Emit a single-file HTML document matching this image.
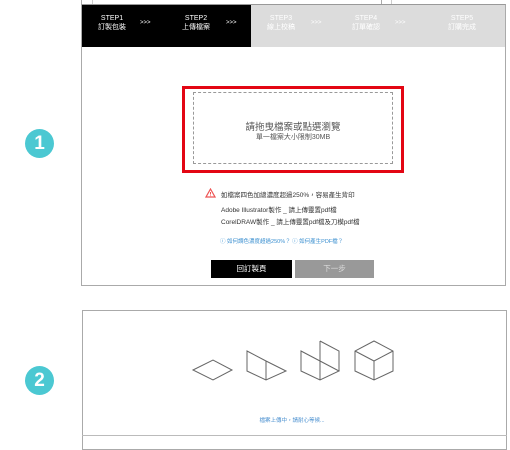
<!DOCTYPE html>
<html><head><meta charset="utf-8"><style>
*{margin:0;padding:0;box-sizing:border-box}
body{width:510px;height:448px;background:#fff;position:relative;overflow:hidden;font-family:"Liberation Sans","Noto Sans CJK TC",sans-serif}
.a{position:absolute}
.circ{position:absolute;width:29px;height:29px;border-radius:50%;background:#4bc8d2;color:#fff;font-weight:bold;font-size:19px;text-align:center;line-height:29px}
.st{position:absolute;top:14px;font-size:7px;text-align:center;line-height:9px;width:40px}
.ar{position:absolute;top:20px;font-size:6px}
.t{position:absolute;font-size:6.5px;color:#333;white-space:nowrap}
</style></head><body>
<div class="a" style="left:81px;top:0;width:1px;height:5px;background:#aaa"></div>
<div class="a" style="left:92px;top:0;width:1px;height:5px;background:#ccc"></div>
<div class="a" style="left:381px;top:0;width:1px;height:5px;background:#aaa"></div>
<div class="a" style="left:391px;top:0;width:1px;height:5px;background:#ccc"></div>
<div class="a" style="left:81px;top:4px;width:425px;height:282px;border:1px solid #aaa;border-top-color:#999"></div>
<div class="a" style="left:82px;top:5px;width:169px;height:42px;background:#000"></div>
<div class="a" style="left:251px;top:5px;width:254px;height:42px;background:#dcdcdc"></div>
<div class="st" style="left:92px;color:#fff">STEP1<br>訂製包裝</div>
<div class="ar" style="left:140px;color:#fff">&gt;&gt;&gt;</div>
<div class="st" style="left:176px;color:#fff">STEP2<br>上傳檔案</div>
<div class="ar" style="left:226px;color:#fff">&gt;&gt;&gt;</div>
<div class="st" style="left:261px;color:#fff">STEP3<br>線上校稿</div>
<div class="ar" style="left:311px;color:#fff">&gt;&gt;&gt;</div>
<div class="st" style="left:346px;color:#fff">STEP4<br>訂單確認</div>
<div class="ar" style="left:395px;color:#fff">&gt;&gt;&gt;</div>
<div class="st" style="left:442px;color:#fff">STEP5<br>訂購完成</div>
<div class="a" style="left:182px;top:86px;width:222px;height:87px;border:3px solid #e30613"></div>
<div class="a" style="left:193px;top:92px;width:200px;height:72px;border:1px dashed #999"></div>
<div class="t" style="left:0;width:586px;text-align:center;top:119px;font-size:9.5px;color:#555">請拖曳檔案或點選瀏覽</div>
<div class="t" style="left:0;width:586px;text-align:center;top:132px;font-size:7px;color:#555">單一檔案大小限制30MB</div>
<svg class="a" style="left:205px;top:188px" width="11" height="10"><path d="M5.5 1 L10 9 L1 9 Z" fill="none" stroke="#e55" stroke-width="1.2"/><path d="M5.5 4v2.5M5.5 7.5v.6" stroke="#e55"/></svg>
<div class="t" style="left:221px;top:189px">如檔案四色加總濃度超過250%，容易產生背印</div>
<div class="t" style="left:221px;top:204px">Adobe Illustrator製作 _ 請上傳靈置pdf檔</div>
<div class="t" style="left:221px;top:216px">CorelDRAW製作 _ 請上傳靈置pdf檔及刀模pdf檔</div>
<div class="t" style="left:220px;top:237px;font-size:5.5px;color:#3a8fd0">ⓘ 如何調色濃度超過250%？ ⓘ 如何產生PDF檔？</div>
<div class="a" style="left:211px;top:260px;width:81px;height:18px;background:#000;color:#fff;font-size:7.5px;text-align:center;line-height:18px">回訂製頁</div>
<div class="a" style="left:295px;top:260px;width:79px;height:18px;background:#999;color:#ddd;font-size:7.5px;text-align:center;line-height:18px">下一步</div>
<div class="a" style="left:82px;top:310px;width:425px;height:140px;border:1px solid #aaa"></div>
<div class="a" style="left:82px;top:435px;width:425px;height:1px;background:#bbb"></div>
<svg class="a" style="left:0;top:0" width="510" height="448"><g fill="none" stroke="#666" stroke-width="1">
<path d="M193 370L213 360L232 370L213 380Z"/>
<path d="M247 351L266 361L286 371L266 380L247 371Z M266 361V380"/>
<path d="M301 351L320 361L339 371L320 380L301 371Z M320 341L339 351V371 M320 341V380"/>
<path d="M374 341L393 351V371L374 380L355 371V351Z M355 351L374 361L393 351 M374 361V380"/>
</g></svg>
<div class="t" style="left:0;width:584px;text-align:center;top:416px;font-size:5.5px;color:#4a90d0">檔案上傳中，請耐心等候...</div>
<div class="circ" style="left:25px;top:129px">1</div>
<div class="circ" style="left:25px;top:366px">2</div>
</body></html>
